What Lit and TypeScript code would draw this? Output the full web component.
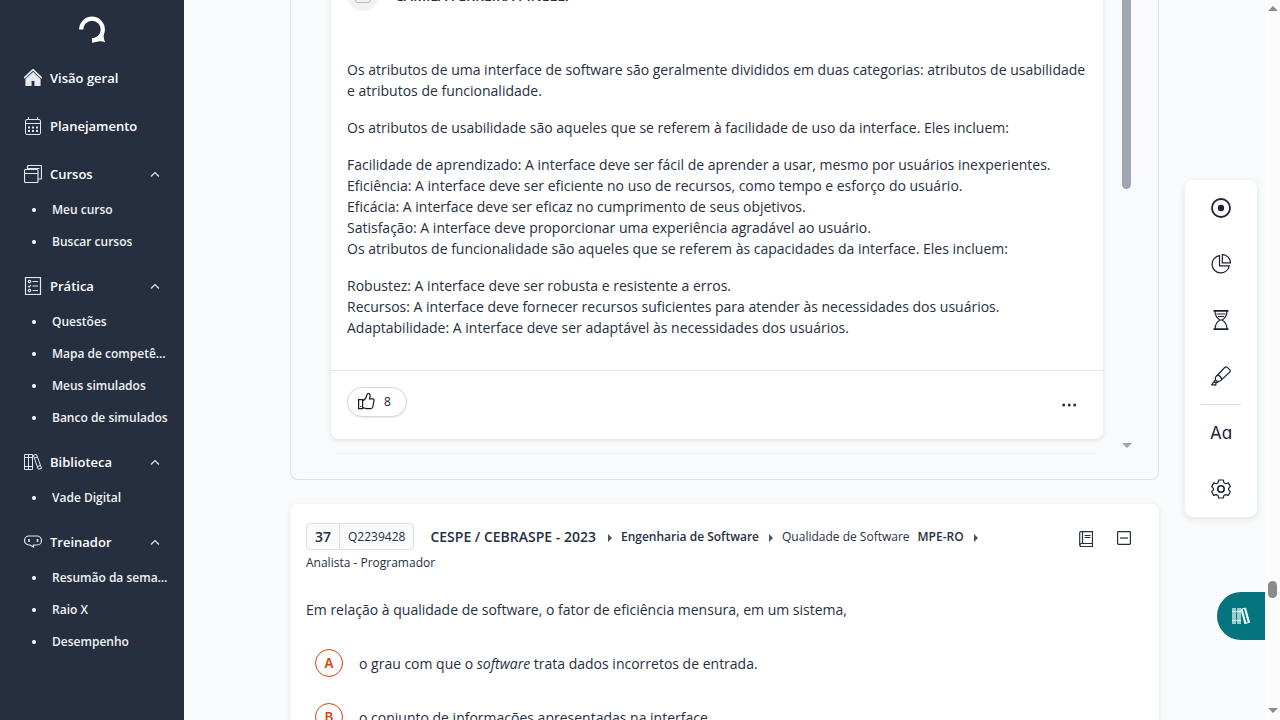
import { LitElement, html, css, svg, nothing } from "lit";
import { customElement, property, state } from "lit/decorators.js";

const icons: Record<string, unknown> = {
  logo: svg`<path d="M3.200 14.500A10.800 10.800 0 1 1 14 25.300" fill="none" stroke="#fff" stroke-width="4.200"/><path d="M14 23.200c4-.2 6.500-2 8.500-5l3 .5c0 3.500.5 6 1.800 8.700-2.500-1.100-4.800-1.300-7.300-.8-2 .600-4 .8-6 .8z" fill="#fff" stroke="none"/>`,
  home: svg`<path d="M.6 8.600 9 .7l8.400 7.900" fill="none" stroke="#e8eaee" stroke-width="1.700" stroke-linecap="round"/><path d="M9 3.700 16 10.300V16.500H11V11.500H7v5H2v-6.200z" fill="#e8eaee"/>`,
  calendar: svg`<rect x="1.500" y="2.500" width="15" height="15" rx="1.500" stroke-width="1"/><path d="M1.500 6.500h15M4.500 0v3M13.500 0v3" stroke-width="1"/><path d="M4 10.500h2m2 0h2m2 0h2M4 14h2m2 0h2m2 0h2" stroke-width="2"/>`,
  windows: svg`<rect x=".5" y="4.500" width="13.500" height="13" rx="1"/><path d="M.5 8.500H14M3.500 4.500V1.500a1 1 0 0 1 1-1h12a1 1 0 0 1 1 1v11.500a1 1 0 0 1-1 1H14M3.500 3.500H15.500"/>`,
  checklist: svg`<rect x="1.500" y=".5" width="15" height="17"/><circle cx="5.500" cy="4.500" r="1.200"/><circle cx="5.500" cy="13.500" r="1.200"/><path d="M4 9l1.200 1L7 8M8.500 4.500H14M8.500 9H14M8.500 13.500H14"/>`,
  books: svg`<path d="M.5 1.500h4v15h-4zM4.500 1.500h4v15h-4zM.5 4.500h8M.5 13.500h8M9.300 2.300l3.200-1 5 14-3.200 1zM10.300 5l3.300-1M13.300 13.500l3.300-1" stroke-width="1"/>`,
  shelf: svg`<path d="M0 1h4v16H0zM5 1h4v16H5z" fill="currentColor" fill-opacity=".65" stroke="none"/><path d="M0 4.500h9M0 13.500h9" stroke-width="1"/><path d="M9.500 2.300l4 14.500M13 1.300l4 14.500" stroke-width="2.200"/><path d="M9 2.300l4.500-1.300M13 16.500l4.500-1.300" stroke-width="1"/>`,
  coach: svg`<path d="M5 3h8a4.500 4.500 0 0 1 0 9H9.500v2L6 12H5a4.500 4.500 0 0 1 0-9z"/><path d="M5 6v3M13.500 6v3" stroke-width="1.600"/>`,
  up: svg`<path d="M1 5.500 5 1.500l4 4" stroke-width="1.200"/>`,
  target: svg`<circle cx="10" cy="10" r="9" stroke-width="1.800"/><circle cx="10" cy="10" r="3.200" fill="currentColor" stroke="none"/>`,
  pie: svg`<path d="M8.500 1.600A8.700 8.700 0 1 0 18.300 11.800H8.500zM11.300.7v8.200h8.200A8.200 8.200 0 0 0 11.300.7z"/>`,
  hourglass: svg`<path d="M2.500.8h15M2.500 19.200h15" stroke-width="1.700"/><path d="M4 .8c0 5 2 7.500 5 9.200-3 1.700-5 4.200-5 9.200M16 .8c0 5-2 7.500-5 9.200 3 1.700 5 4.200 5 9.200M5.500 4h9M7 6.500h6M8.500 10h3"/>`,
  marker: svg`<path d="m5 10.500 8.700-9q1.300-1.200 2.600-.1l2.400 2.200q1.100 1.300 0 2.600l-9.200 8.600q-2.800 1.300-4.300-.1-1.600-1.700-.2-4.200zM4.600 13.200 3.300 15.300l1.800 1.900 2.600-1.700M3.300 15.300.7 18.700l4 .3.400-1.800M6.800 9.200c2 .5 3.300 1.800 3.900 4"/>`,
  gear: svg`<circle cx="10" cy="10" r="3.200" stroke-width="1.600"/><path d="M7.700 1h4.600l.6 2.700 1.800 1 2.600-.8 2 3.700-1.700 1.800v1.500l1.700 1.800-2 3.700-2.600-.8-1.800 1-.6 2.400H7.700l-.6-2.400-1.800-1-2.600.8-2-3.700 1.700-1.800V9.400L.7 7.600l2-3.700 2.600.8 1.800-1z" stroke-linejoin="round"/>`,
  like: svg`<path d="M.6 6.600h4v9h-4zM4.600 8c2.400-1 3.700-2.900 4.100-5.300C8.900 1.300 9.200.5 10.200.5c1.500 0 2 1.300 1.900 2.700l-.6 2.700h3.600c.8 0 1.100.6.900 1.500l-1.200 6.500c-.3 1.200-1 1.700-2 1.700H8.500l-3.900-1"/><path d="M2.600 13v1"/>`,
  dots: svg`<g fill="currentColor" stroke="none"><circle cx="1.700" cy="2" r="1.500"/><circle cx="7.200" cy="2" r="1.500"/><circle cx="12.700" cy="2" r="1.500"/></g>`,
  notebook: svg`<path d="M2.500.6h11v15H2.500a1.700 1.700 0 0 1-1.800-1.800V2A1.400 1.400 0 0 1 2.500.6zM3.500.6v11.900M13.500 12.500h-11a1.500 1.500 0 0 0 0 3M5.500 4.500h6M5.500 6.500h6"/>`,
  collapse: svg`<rect x=".6" y=".6" width="12.800" height="12.800" rx=".8"/><path d="M3 7h8"/>`,
};

function icon(name: string, w: number, h: number) {
  return html`<svg class="icon" width=${w} height=${h} viewBox="0 0 ${w} ${h}" fill="none"
    stroke="currentColor" stroke-width="1.200" aria-hidden="true">${icons[name]}</svg>`;
}

const iconStyles = css`
  .icon { display: block; flex: none; }
  * { box-sizing: border-box; }
  button { font: inherit; color: inherit; background: none; border: 0; padding: 0; cursor: pointer; }
  a { color: inherit; text-decoration: none; }
`;

interface Section { label: string; icon: string; items?: string[]; }

const sections: Section[] = [
  { label: "Visão geral", icon: "home" },
  { label: "Planejamento", icon: "calendar" },
  { label: "Cursos", icon: "windows", items: ["Meu curso", "Buscar cursos"] },
  { label: "Prática", icon: "checklist", items: ["Questões", "Mapa de competências", "Meus simulados", "Banco de simulados"] },
  { label: "Biblioteca", icon: "books", items: ["Vade Digital"] },
  { label: "Treinador", icon: "coach", items: ["Resumão da semana", "Raio X", "Desempenho"] },
];

@customElement("side-nav")
class SideNav extends LitElement {
  @state() closed: string[] = [];

  static styles = [iconStyles, css`
    :host { display: block; flex: none; width: 184px; background: #262f3f; color: #fff; overflow: hidden; }
    .logo { display: flex; justify-content: center; padding: 15px 0; }
    nav { display: flex; flex-direction: column; gap: 8px; }
    .head { display: flex; align-items: center; gap: 8px; width: 100%; height: 40px; padding: 0 24px;
      font-size: 13px; font-weight: 600; text-align: left; color: #fff; }
    .head .icon { color: #e3e6ea; }
    .label { flex: 1; }
    ul { list-style: none; margin: 0; padding: 0; }
    .sub { display: flex; align-items: center; gap: 16px; height: 32px; padding: 0 12px 0 32px;
      font-size: 12px; font-weight: 600; color: #f1f3f5; }
    .sub::before { content: ""; flex: none; width: 4px; height: 4px; border-radius: 2px; background: #fff; }
    .text { padding-bottom: 2px; overflow: hidden; text-overflow: ellipsis; white-space: nowrap; }
  `];

  toggle(label: string) {
    this.closed = this.closed.includes(label) ? this.closed.filter((l) => l !== label) : [...this.closed, label];
  }

  render() {
    return html`
      <a class="logo" href="#" aria-label="Início">${icon("logo", 28, 28)}</a>
      <nav>
        ${sections.map((s) => s.items
          ? html`<div>
              <button class="head" aria-expanded=${!this.closed.includes(s.label)} @click=${() => this.toggle(s.label)}>
                ${icon(s.icon, 18, 18)}<span class="label">${s.label}</span>${icon("up", 10, 7)}
              </button>
              ${this.closed.includes(s.label) ? nothing : html`<ul>
                ${s.items.map((i) => html`<li><a class="sub" href="#"><span class="text">${i}</span></a></li>`)}
              </ul>`}
            </div>`
          : html`<a class="head" href="#">${icon(s.icon, 18, 18)}<span class="label">${s.label}</span></a>`)}
      </nav>`;
  }
}

@customElement("comment-card")
class CommentCard extends LitElement {
  @property() author = "";
  @property({ type: Number }) likes = 0;
  @property({ attribute: false }) paragraphs: string[][] = [];

  static styles = [iconStyles, css`
    :host { display: block; background: #fff; border-radius: 8px; box-shadow: 0 1px 5px #1f293720; }
    header { display: flex; align-items: center; gap: 16px; padding: 0 16px; }
    .avatar { display: flex; align-items: center; justify-content: center; width: 32px; height: 32px;
      border-radius: 50%; background: #f1f2f4; }
    .person { width: 16px; height: 16px; border: 1px solid #b9bbc0; border-radius: 3px; }
    .author { font-size: 14px; line-height: 21px; font-weight: 600; text-transform: uppercase; }
    .body { padding: 48px 16px 32px; font-size: 14px; line-height: 21px; color: #272f40; }
    p { margin: 0 0 16px; }
    p:last-child { margin: 0; }
    .line { display: block; }
    footer { display: flex; align-items: center; justify-content: space-between;
      padding: 16px 26px 22px 16px; border-top: 1px solid #e2e4e7; }
    .like { display: flex; align-items: center; gap: 9px; height: 30px; padding: 0 15px 1px 10px; border-radius: 15px;
      border: 1px solid #d5d6dd; box-shadow: 0 1px 2px #1f29371a; font-size: 12px; color: #171c2b; }
    .more { padding: 6px 0 0; }
  `];

  render() {
    return html`
      <header>
        <span class="avatar"><span class="person"></span></span>
        <span class="author">${this.author}</span>
      </header>
      <div class="body">
        ${this.paragraphs.map((p) => html`<p>${p.map((l) => html`<span class="line">${l}</span>`)}</p>`)}
      </div>
      <footer>
        <button class="like" aria-label="Curtir">${icon("like", 17, 17)}<span>${this.likes}</span></button>
        <button class="more" aria-label="Mais opções">${icon("dots", 15, 4)}</button>
      </footer>`;
  }
}

@customElement("question-card")
class QuestionCard extends LitElement {
  static styles = [iconStyles, css`
    :host { display: block; background: #fff; border-radius: 8px; box-shadow: 0 1px 5px #1f293718; padding: 19px 16px; }
    .top { display: flex; justify-content: space-between; gap: 80px; }
    .meta { display: flex; flex-wrap: wrap; align-items: center; font-size: 12px; line-height: 26px; flex: 1; }
    .badge { display: flex; height: 27px; margin-right: 16px; border: 1px solid #dfe1e4; border-radius: 4px; background: #f8fafc; }
    .number { padding: 0 8px; font-size: 14px; font-weight: 600; border-right: 1px solid #dfe1e4; }
    .code { padding: 0 8px; }
    .board { margin-right: 2px; font-size: 14px; font-weight: 600; }
    .strong { font-weight: 600; }
    .arrow { width: 0; border: 4px solid transparent; border-left-color: #4a5364; border-right: 0; margin: 2px 9px 0 10px; }
    .org { margin-left: 8px; }
    .actions { display: flex; align-items: flex-start; gap: 24px; padding: 8px 12px 0 0; }
    .statement { margin: 23px 0 29px; font-size: 14px; line-height: 21px; }
    fieldset { border: 0; margin: 0; padding: 0 9px; display: flex; flex-direction: column; gap: 26px; min-width: 0; }
    .option { display: flex; align-items: center; gap: 16px; font-size: 14px; line-height: 21px; }
    .letter { width: 28px; height: 28px; border: 1px solid #dc3f0e; border-radius: 50%;
      color: #dc3f0e; font: 600 13px/26px Inter, sans-serif; text-align: center; }
  `];

  render() {
    const arrow = html`<span class="arrow"></span>`;
    return html`
      <div class="top">
        <div class="meta">
          <div class="badge"><span class="number">37</span><span class="code">Q2239428</span></div>
          <span class="board">CESPE / CEBRASPE - 2023</span>${arrow}
          <span class="strong">Engenharia de Software</span>${arrow}
          <span>Qualidade de Software</span>
          <span class="strong org">MPE-RO</span>${arrow}
          <span>Analista - Programador</span>
        </div>
        <div class="actions">
          <button aria-label="Caderno">${icon("notebook", 14, 16)}</button>
          <button aria-label="Recolher">${icon("collapse", 14, 14)}</button>
        </div>
      </div>
      <p class="statement">Em relação à qualidade de software, o fator de eficiência mensura, em um sistema,</p>
      <fieldset aria-label="Alternativas">
        <div class="option"><button class="letter" aria-describedby="a">A</button><span id="a">o grau com que o <i>software</i> trata dados incorretos de entrada.</span></div>
        <div class="option"><button class="letter" aria-describedby="b">B</button><span id="b">o conjunto de informações apresentadas na interface.</span></div>
      </fieldset>`;
  }
}

const answer = [
  ["Os atributos de uma interface de software são geralmente divididos em duas categorias: atributos de usabilidade e atributos de funcionalidade."],
  ["Os atributos de usabilidade são aqueles que se referem à facilidade de uso da interface. Eles incluem:"],
  [
    "Facilidade de aprendizado: A interface deve ser fácil de aprender a usar, mesmo por usuários inexperientes.",
    "Eficiência: A interface deve ser eficiente no uso de recursos, como tempo e esforço do usuário.",
    "Eficácia: A interface deve ser eficaz no cumprimento de seus objetivos.",
    "Satisfação: A interface deve proporcionar uma experiência agradável ao usuário.",
    "Os atributos de funcionalidade são aqueles que se referem às capacidades da interface. Eles incluem:",
  ],
  [
    "Robustez: A interface deve ser robusta e resistente a erros.",
    "Recursos: A interface deve fornecer recursos suficientes para atender às necessidades dos usuários.",
    "Adaptabilidade: A interface deve ser adaptável às necessidades dos usuários.",
  ],
];

const tools = [
  { name: "target", label: "Foco" },
  { name: "pie", label: "Estatísticas" },
  { name: "hourglass", label: "Cronômetro" },
  { name: "marker", label: "Marcador" },
];

@customElement("app-root")
class AppRoot extends LitElement {
  static styles = [iconStyles, css`
    :host { display: flex; position: relative; height: 100vh; overflow: hidden; background: #f8fafc;
      color: #272f40; font-family: "Open Sans", "Noto Sans", sans-serif; }
    main { flex: 1; min-width: 0; padding: 0 106px; overflow: hidden; }
    .thread { display: flex; padding: 0 27px 25px 0; border: 1px solid #dfe1e4; border-top: 0; border-radius: 0 0 8px 8px; }
    .comments { flex: 1; min-width: 0; padding: 0 19px 0 40px; overflow: hidden; }
    .scrolled { margin-top: -21px; }
    .next { height: 8px; margin: 16px 0 -9px; border-radius: 8px 8px 0 0; box-shadow: 0 0 3px #1f293740; }
    .track { display: flex; flex-direction: column; justify-content: space-between; width: 9px; }
    .thumb { height: 189px; border-radius: 0 0 5px 5px; background: #9fa6b2; }
    .down { width: 0; border: 5px solid transparent; border-top-color: #9fa6b2; border-bottom: 0; margin-bottom: 6px; }
    question-card { margin-top: 24px; }
    .page-bar { flex: none; display: flex; flex-direction: column; align-items: center; justify-content: space-between;
      width: 15px; padding: 6px 0 7px; background: #fcfcfc; }
    .tri { width: 0; border: 5px solid transparent; }
    .tri-up { border-bottom-color: #8b8b8b; border-top: 0; }
    .tri-down { border-top-color: #8b8b8b; border-bottom: 0; }
    .page-thumb { width: 9px; height: 17px; border-radius: 5px; background: #8b8b8b; margin-top: auto; margin-bottom: 110px; }
    .tools { position: absolute; top: 180px; right: 23px; width: 72px; border-radius: 8px; background: #fff;
      box-shadow: 0 2px 6px #1f29371c; color: #1c2234; }
    .tool { display: flex; align-items: center; justify-content: center; width: 100%; height: 56px; }
    .rule { border: 0; border-top: 1px solid #dfe1e4; margin: 0 16px; }
    .aa { font: 400 17px/20px Inter, sans-serif; font-feature-settings: "cv11"; }
    .library { position: absolute; top: 592px; right: 15px; display: flex; align-items: center; justify-content: center;
      width: 48px; height: 48px; border-radius: 24px 0 0 24px; background: #04747f; color: #e9ffff; }
  `];

  render() {
    return html`
      <side-nav></side-nav>
      <main>
        <section class="thread">
          <div class="comments">
            <comment-card class="scrolled" author="Camila Ferreira Pinelli" .likes=${8} .paragraphs=${answer}></comment-card>
            <div class="next"></div>
          </div>
          <div class="track" aria-hidden="true"><span class="thumb"></span><span class="down"></span></div>
        </section>
        <question-card></question-card>
      </main>
      <div class="page-bar" aria-hidden="true">
        <span class="tri tri-up"></span><span class="page-thumb"></span><span class="tri tri-down"></span>
      </div>
      <aside class="tools">
        ${tools.map((t) => html`<button class="tool" aria-label=${t.label}>${icon(t.name, 20, 20)}</button>`)}
        <hr class="rule" />
        <button class="tool aa" aria-label="Tamanho do texto">Aa</button>
        <button class="tool" aria-label="Configurações">${icon("gear", 20, 20)}</button>
      </aside>
      <button class="library" aria-label="Biblioteca">${icon("shelf", 18, 18)}</button>`;
  }
}
